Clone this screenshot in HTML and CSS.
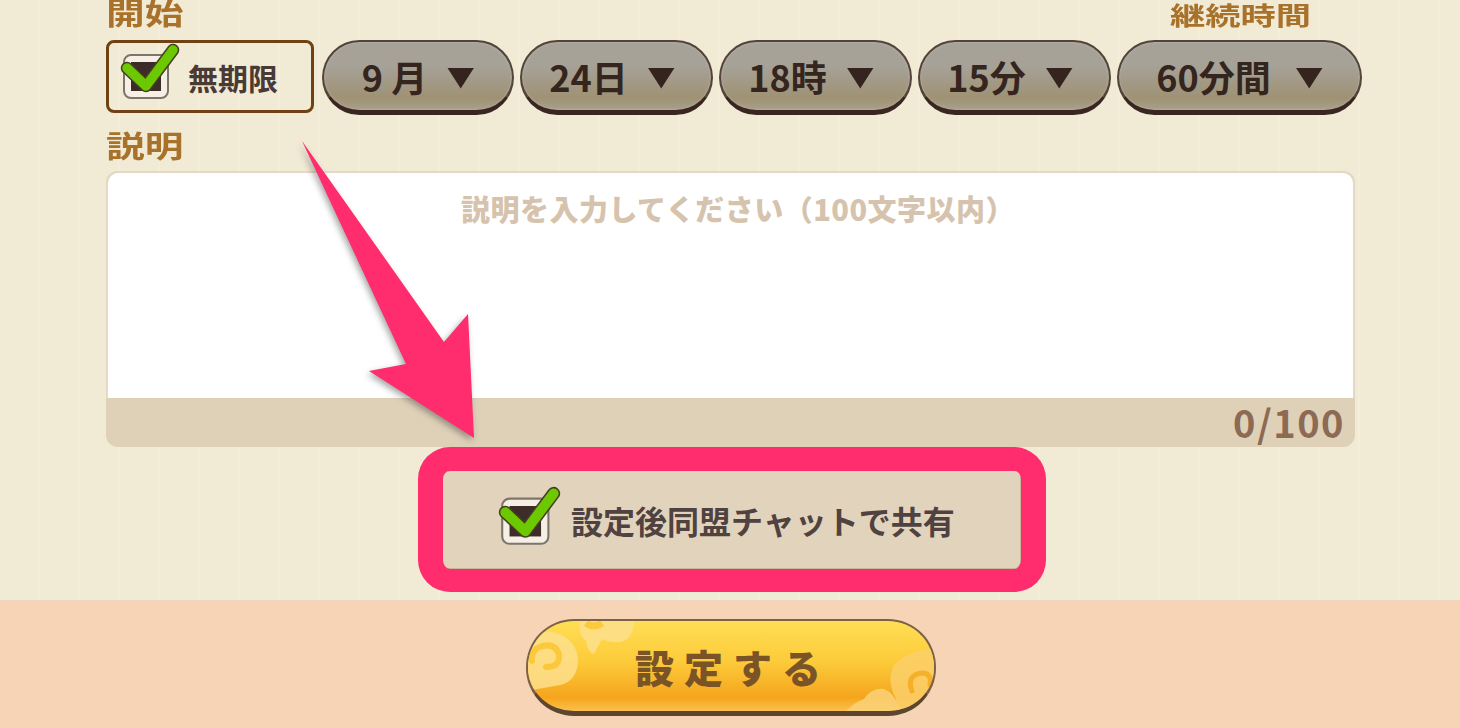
FILE: index.html
```html
<!DOCTYPE html>
<html lang="ja">
<head>
    <meta charset="UTF-8">
    <title>イベント設定</title>
    <link rel="stylesheet" href="styles.css">
</head>
<body>
    <div class="form">
        <div class="label-row">
            <div class="label">開始</div>
            <div class="label label-right">継続時間</div>
        </div>

        <div class="select-row">
            <div class="no-limit">
                <svg class="check-icon" viewBox="0 0 60 60">
                    <rect x="4" y="13" width="44" height="43" rx="7" fill="#f6efe6" stroke="#7d7568" stroke-width="2"/>
                    <rect x="11" y="20" width="30" height="29" fill="#3d2c28"/>
                    <path d="M7 26 L26 44 L53 8" fill="none" stroke="#45401f" stroke-width="12.5" stroke-linecap="round" stroke-linejoin="round"/>
                    <path d="M7 26 L26 44 L53 8" fill="none" stroke="#6cc800" stroke-width="9.5" stroke-linecap="round" stroke-linejoin="round"/>
                </svg>
                <span>無期限</span>
            </div>
            <div class="pill pill-month"><span class="pill-text">9&nbsp;月</span><i class="arrow"></i></div>
            <div class="pill pill-time"><span class="pill-text">24日</span><i class="arrow"></i></div>
            <div class="pill pill-time"><span class="pill-text">18時</span><i class="arrow"></i></div>
            <div class="pill pill-time"><span class="pill-text">15分</span><i class="arrow"></i></div>
            <div class="pill pill-long"><span class="pill-text">60分間</span><i class="arrow"></i></div>
        </div>

        <div class="label label-desc">説明</div>

        <div class="desc-box">
            <div class="desc-input">説明を入力してください（100文字以内）</div>
            <div class="desc-count">0/100</div>
        </div>

        <div class="share">
            <svg class="check-icon" viewBox="0 0 60 60">
                <rect x="4" y="13" width="44" height="43" rx="7" fill="#f6efe6" stroke="#7d7568" stroke-width="2"/>
                <rect x="11" y="20" width="30" height="29" fill="#3d2c28"/>
                <path d="M7 26 L26 44 L53 8" fill="none" stroke="#45401f" stroke-width="12.5" stroke-linecap="round" stroke-linejoin="round"/>
                <path d="M7 26 L26 44 L53 8" fill="none" stroke="#6cc800" stroke-width="9.5" stroke-linecap="round" stroke-linejoin="round"/>
            </svg>
            <span>設定後同盟チャットで共有</span>
            <div class="share-frame"></div>
        </div>
    </div>

    <div class="footer">
        <button class="submit">
            <svg class="clouds" viewBox="0 0 410 97">
                <path d="M0 20 Q16 10 30 14 Q50 20 52 40 Q52 62 34 66 L0 72 Z" fill="#fde08c"/>
                <path d="M20 48 Q34 48 33 36 Q30 24 16 27 Q4 31 6 42" fill="none" stroke="#fbc83a" stroke-width="6" stroke-linecap="round"/>
                <path d="M54 0 L108 0 Q108 20 95 23 Q84 24 76 20 L68 35 Q62 34 60 22 Q52 16 54 0 Z" fill="#fde08c"/>
                <path d="M60 4 Q68 10 76 4" fill="none" stroke="#fbc83a" stroke-width="7"/>
                <path d="M410 30 Q384 30 368 46 Q360 62 370 80 L368 97 L410 97 Z" fill="#fccf6a"/>
                <path d="M386 72 Q380 56 396 54 Q406 54 404 66" fill="none" stroke="#f5ae2a" stroke-width="5" stroke-linecap="round"/>
                <path d="M316 97 Q326 84 338 80 Q346 68 358 70 Q368 74 372 86 L384 97 Z" fill="#fbd278"/>
            </svg>
            <span class="submit-text">設定する</span>
        </button>
    </div>

    <svg class="pointer" viewBox="0 0 1460 728">
        <polygon points="302,141 444,342 468,314 474,438 369,371 406,364" fill="#ff2d6e"/>
    </svg>
</body>
</html>
```

FILE: styles.css
```css
* {
    margin: 0;
    padding: 0;
    box-sizing: border-box;
}

body {
    font-family: "Noto Sans CJK JP", "Noto Sans", sans-serif;
    font-weight: 700;
    width: 1460px;
    height: 728px;
    overflow: hidden;
    position: relative;
    background: #f1ead5;
}

.form {
    height: 600px;
    padding-left: 106px;
    background: repeating-linear-gradient(90deg, #f1ead5 0, #f1ead5 38px, #f3edda 38px, #f3edda 40px);
}

.label-row {
    height: 40px;
    display: flex;
    justify-content: space-between;
    padding-right: 149px;
}

/* the labels in the game art are stretched sideways */
.label {
    width: fit-content;
    font-size: 30px;
    line-height: 30px;
    color: #a8722a;
    transform: scaleX(1.29);
    transform-origin: left;
}

.label-row .label {
    margin-top: -4px;
}

.label-row .label-right {
    font-size: 25px;
    line-height: 25px;
    margin-top: 2px;
    transform: scaleX(1.41);
    transform-origin: right;
}

.select-row {
    display: flex;
    height: 75px;
    gap: 6px;
}

.no-limit {
    width: 208px;
    height: 73px;
    margin-right: 2px;
    display: flex;
    align-items: center;
    gap: 8px;
    padding-left: 11px;
    border: 3px solid #6f4214;
    border-radius: 8px;
    font-size: 30px;
    color: #4a3a36;
}

.check-icon {
    width: 60px;
    height: 60px;
    flex: none;
    margin-bottom: 9px;
}

.pill {
    height: 75px;
    display: flex;
    align-items: center;
    justify-content: center;
    gap: 20px;
    border: 2.5px solid #54433a;
    border-bottom: 5px solid #3a2620;
    border-radius: 38px;
    background: linear-gradient(#a6a298 0, #a6a298 35%, #9f9274 82%, #a89f8c 100%);
    box-shadow: inset 0 0 3px rgba(255, 255, 255, 0.25);
    color: #35251f;
    font-size: 36px;
    line-height: 1;
}

.pill-month { width: 192px; }
.pill-time { width: 193px; padding-right: 9px; }
.pill-long { width: 245px; gap: 25px; }

.arrow {
    width: 27px;
    height: 21px;
    margin-top: 4px;
    background: #35231e;
    clip-path: polygon(0 0, 100% 0, 50% 100%);
}

.label-desc {
    margin-top: 14px;
    margin-bottom: 1px;
    height: 41px;
}

.desc-box {
    width: 1249px;
    height: 276px;
    display: flex;
    flex-direction: column;
    border-radius: 12px;
    background: #dfd0b8;
}

.desc-input {
    flex: 1;
    padding: 15px 0 0 15px;
    text-align: center;
    font-size: 29px;
    font-weight: 900;
    letter-spacing: 0.5px;
    line-height: 40px;
    color: #d6c3ae;
    background: #fff;
    border: 2px solid #e5d8c4;
    border-bottom: 0;
    border-radius: 12px 12px 0 0;
}

.desc-count {
    height: 49px;
    padding-right: 10px;
    text-align: right;
    font-size: 38px;
    letter-spacing: 1.5px;
    line-height: 47px;
    color: #8c6a53;
}

.share {
    position: relative;
    width: 578px;
    height: 98px;
    margin: 24px 0 0 337px;
    display: flex;
    align-items: center;
    gap: 10px;
    padding-left: 55px;
    border-radius: 6px;
    background: #e2d4bc;
    box-shadow: inset -1px -1px 0 #c4b998;
    font-size: 32px;
    color: #4f4240;
}

.share .check-icon {
    width: 63px;
    height: 63px;
    margin-bottom: 8px;
}

.share-frame {
    position: absolute;
    top: -24px;
    bottom: -23px;
    left: -25px;
    right: -25px;
    border: solid #ff2d6e;
    border-width: 24px 25px 23px;
    border-radius: 32px;
}

.footer {
    height: 128px;
    padding: 17px 0 0 2px;
    display: flex;
    justify-content: center;
    background: #f6d4b5;
    border-top: 2px solid #eed8bd;
}

.submit {
    position: relative;
    width: 410px;
    height: 97px;
    overflow: hidden;
    border: 2px solid #7a6148;
    border-bottom: 5px solid #5c4630;
    border-radius: 48px;
    background: linear-gradient(#ffde55 0, #fccb3a 45%, #f5a51d 85%, #fbc04e 100%);
    font-family: inherit;
    font-weight: 700;
}

.clouds {
    position: absolute;
    top: -2px;
    left: -2px;
    width: 410px;
    height: 97px;
    opacity: 0.85;
}

.submit-text {
    position: relative;
    font-size: 39px;
    font-weight: 900;
    letter-spacing: 10px;
    margin-right: -4px;
    color: #7a5327;
}

.pointer {
    position: absolute;
    top: 0;
    left: 0;
    width: 1460px;
    height: 728px;
    pointer-events: none;
    filter: drop-shadow(-2px 3px 3px rgba(60, 60, 60, 0.45));
}
```
